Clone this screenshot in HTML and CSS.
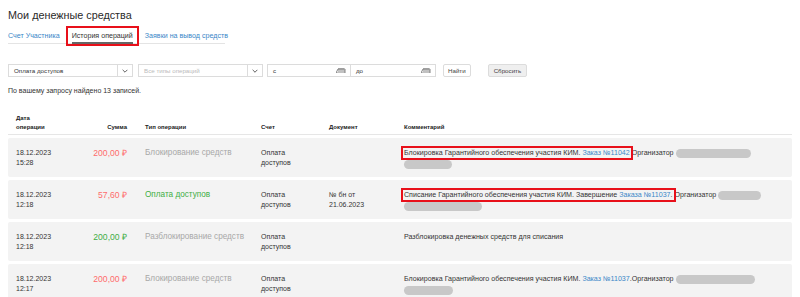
FILE: index.html
```html
<!DOCTYPE html>
<html lang="ru">
<head>
	<meta charset="utf-8">
	<title>Мои денежные средства</title>
	<link rel="stylesheet" href="styles.css">
</head>
<body>

	<section class="funds">
		<h1>Мои денежные средства</h1>

		<nav class="tabs">
			<a class="tab">Счет Участника</a>
			<a class="tab active"><span class="mark">История операций</span></a>
			<a class="tab">Заявки на вывод средств</a>
		</nav>

		<form class="filters">
			<div class="select">
				<span class="select-text">Оплата доступов</span>
				<span class="select-arrow">
					<svg viewBox="0 0 10 6"><polyline points="1,1 5,5 9,1"/></svg>
				</span>
			</div>
			<div class="select">
				<span class="select-text placeholder">Все типы операций</span>
				<span class="select-arrow">
					<svg viewBox="0 0 10 6"><polyline points="1,1 5,5 9,1"/></svg>
				</span>
			</div>
			<div class="dates">
				<div class="date">
					<span>с</span>
					<svg class="cal" viewBox="0 0 10 5"><path d="M0 5 L2 1 H9 V5 Z M3 0 V2 M5 0 V2 M7 0 V2 M2 3 H9"/></svg>
				</div>
				<div class="date">
					<span>до</span>
					<svg class="cal" viewBox="0 0 10 5"><path d="M0 5 L2 1 H9 V5 Z M3 0 V2 M5 0 V2 M7 0 V2 M2 3 H9"/></svg>
				</div>
			</div>
			<button type="button" class="btn">Найти</button>
			<button type="button" class="btn btn-reset">Сбросить</button>
		</form>

		<p class="found">По вашему запросу найдено 13 записей.</p>

		<div class="ops">
			<div class="row head">
				<div>Дата<br>операции</div>
				<div class="sum">Сумма</div>
				<div class="type">Тип операции</div>
				<div>Счет</div>
				<div>Документ</div>
				<div>Комментарий</div>
			</div>

			<div class="row">
				<div>18.12.2023<br>15:28</div>
				<div class="sum minus">200,00 ₽</div>
				<div class="type muted">Блокирование средств</div>
				<div>Оплата<br>доступов</div>
				<div></div>
				<div class="comment"><span class="mark">Блокировка Гарантийного обеспечения участия КИМ. <a>Заказ №11042</a></span> Организатор <span class="hide" style="width:75px"></span> <span class="hide" style="width:48px"></span></div>
			</div>

			<div class="row">
				<div>18.12.2023<br>12:18</div>
				<div class="sum minus">57,60 ₽</div>
				<div class="type paid">Оплата доступов</div>
				<div>Оплата<br>доступов</div>
				<div>№ бн от<br>21.06.2023</div>
				<div class="comment"><span class="mark">Списание Гарантийного обеспечения участия КИМ. Завершение <a>Заказа №11037</a>.</span> Организатор <span class="hide" style="width:43px"></span> <span class="hide" style="width:78px"></span></div>
			</div>

			<div class="row">
				<div>18.12.2023<br>12:18</div>
				<div class="sum plus">200,00 ₽</div>
				<div class="type muted">Разблокирование средств</div>
				<div>Оплата<br>доступов</div>
				<div></div>
				<div class="comment">Разблокировка денежных средств для списания</div>
			</div>

			<div class="row">
				<div>18.12.2023<br>12:17</div>
				<div class="sum minus">200,00 ₽</div>
				<div class="type muted">Блокирование средств</div>
				<div>Оплата<br>доступов</div>
				<div></div>
				<div class="comment">Блокировка Гарантийного обеспечения участия КИМ. <a>Заказ №11037</a>.Организатор <span class="hide" style="width:79px"></span> <span class="hide" style="width:49px"></span></div>
			</div>
		</div>
	</section>

</body>
</html>
```

FILE: styles.css
```css
* {
	box-sizing: border-box;
	padding: 0;
	margin: 0;
}

body {
	background-color: #FFF;
	color: #333;
	font-family: "Liberation Sans", Arial, sans-serif;
	font-size: 7.5px;
	overflow: hidden;
}

.funds {
	padding: 8px 8px 0;
}

h1 {
	font-size: 10.8px;
	font-weight: normal;
	line-height: 14px;
	color: #2A2A2A;
}

/* tabs */

.tabs {
	display: flex;
	gap: 12px;
	width: 217px;
	margin-top: 7px;
	border-bottom: 1px solid #E4E4E4;
	white-space: nowrap;
}

.tab {
	flex: none;
	padding: 2px 0 1px;
	border-bottom: 2px solid transparent;
	margin-bottom: -1px;
	color: #3A87C8;
	font-size: 7.1px;
	line-height: 10px;
	cursor: pointer;
}

.tab.active {
	color: #333;
	border-bottom-color: #666;
}

.mark {
	outline: 2px solid #E8101A;
	outline-offset: 1px;
}

.tab .mark {
	outline-offset: 4px;
}

/* filters */

.filters {
	display: flex;
	align-items: center;
	margin-top: 20px;
}

.select {
	display: flex;
	height: 13px;
	border: 1px solid #DCDCDC;
	margin-right: 5px;
	width: 125px;
}

.select-text {
	flex: 1;
	padding-left: 5px;
	font-size: 6.2px;
	line-height: 11px;
}

.select-text.placeholder {
	color: #BBB;
}

.select-arrow {
	display: flex;
	justify-content: center;
	align-items: center;
	width: 15px;
	border-left: 1px solid #DCDCDC;
}

.select-arrow svg {
	width: 6px;
	height: 4px;
	fill: none;
	stroke: #555;
	stroke-width: 1.5;
}

.dates {
	display: flex;
	margin-left: -1px;
}

.date {
	display: flex;
	align-items: center;
	justify-content: space-between;
	width: 84px;
	height: 13px;
	padding: 0 4px 0 5px;
	border: 1px solid #DCDCDC;
	font-size: 6.2px;
}

.date + .date {
	border-left: 0;
	width: 85px;
}

.cal {
	width: 10px;
	height: 5px;
	fill: none;
	stroke: #777;
	stroke-width: 0.9;
}

.btn {
	height: 13px;
	padding: 0 4px;
	margin-left: 7px;
	border: 1px solid #DCDCDC;
	border-radius: 2px;
	background-color: #FFF;
	color: #444;
	font-family: inherit;
	font-size: 6.2px;
}

.btn-reset {
	margin-left: 17px;
	padding: 0 5px;
	background-color: #EFEFEF;
}

.found {
	margin-top: 9px;
	font-size: 7px;
	line-height: 10px;
}

/* operations */

.ops {
	margin-top: 14px;
}

.row {
	display: grid;
	grid-template-columns: 64px 47px 134px 68px 75px 1fr;
	padding: 10px 8px 5px;
	margin-top: 3px;
	background-color: #F3F3F3;
	border-radius: 2px;
	min-height: 39px;
	line-height: 10px;
	font-size: 7px;
}

.row.head {
	min-height: 0;
	margin-top: 0;
	padding: 4px 8px 2px;
	background-color: transparent;
	border-bottom: 1px solid #E6E6E6;
	border-radius: 0;
	font-size: 6px;
	font-weight: bold;
	line-height: 9px;
	align-items: end;
	color: #222;
}

.sum {
	text-align: right;
	font-size: 8.6px;
}

.head .sum {
	font-size: 6px;
}

.minus {
	color: #FF6B6B;
}

.plus {
	color: #3FAE45;
}

.type {
	padding-left: 18px;
	font-size: 8.2px;
}

.head .type {
	font-size: 6px;
}

.muted {
	color: #A8A8A8;
}

.paid {
	color: #3FAE45;
}

.comment {
	font-size: 7.1px;
	line-height: 11px;
	padding-right: 10px;
}

.comment a {
	color: #3A87C8;
}

.hide {
	display: inline-block;
	height: 9px;
	vertical-align: middle;
	border-radius: 5px;
	background-color: #C8C8C8;
}
```
